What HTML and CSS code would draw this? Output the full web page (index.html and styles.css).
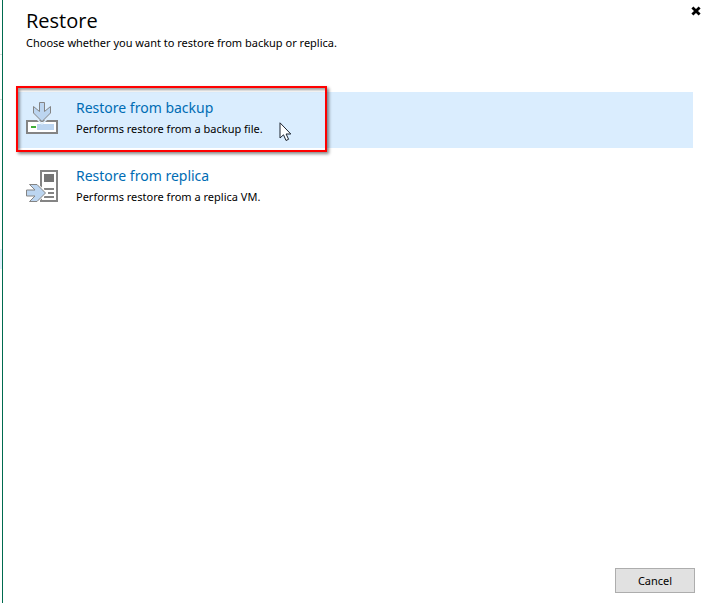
FILE: index.html
```html
<!DOCTYPE html>
<html lang="en">
<head>
<meta charset="utf-8">
<title>Restore</title>
<link rel="stylesheet" href="styles.css">
</head>
<body>
<div class="backdrop"></div>
<main class="dialog">
  <header class="header">
    <div>
      <h1 class="title">Restore</h1>
      <p class="subtitle">Choose whether you want to restore from backup or replica.</p>
    </div>
    <button class="close" type="button" aria-label="Close">
      <svg width="10" height="10" viewBox="0 0 10 10"><path d="M1.4 1.4 8.6 8.6M8.6 1.4 1.4 8.6" stroke="#000" stroke-width="2.8"/></svg>
    </button>
  </header>
  <nav class="options">
    <a class="option selected" href="#backup">
      <svg class="icon" width="32" height="34" viewBox="0 0 32 34">
        <rect x="1" y="21" width="30" height="12" fill="#fff" stroke="#848484" stroke-width="2"/>
        <rect x="4" y="24" width="24" height="6" fill="#bcd5f0"/>
        <rect x="4" y="24" width="7" height="6" fill="#fff"/>
        <rect x="5" y="26" width="5" height="2" fill="#3fae3a"/>
        <path d="M6 13 16 23 26 13V15L16 25 6 15Z" fill="#dcecfb"/>
        <path d="M13.500 2.500h5v9l6-5v6.500L16 21.500 7.500 13V6.500l6 5z" fill="#bcd5f0" stroke="#848484"/>
      </svg>
      <span class="text"><span class="name">Restore from backup</span><span class="detail">Performs restore from a backup file.</span></span>
      <span class="marker"></span>
      <svg class="pointer" width="13" height="20" viewBox="0 0 13 20"><path d="M1 .8V16l3.500-3.200 2.500 5.700 2.600-1.200-2.500-5.300h4.700z" fill="#fff" stroke="#1c2430"/></svg>
    </a>
    <a class="option" href="#replica">
      <svg class="icon" width="32" height="34" viewBox="0 0 32 34">
        <rect x="15" y="3" width="16" height="30" fill="#fff" stroke="#848484" stroke-width="2"/>
        <rect x="18" y="6" width="10" height="8" fill="#757575"/>
        <path d="M18 21h10M22 25h6M18 29h10" stroke="#848484" stroke-width="2"/>
        <path d="M2 15.500h9.500L22 25 12 34H2z" fill="#fff"/>
        <path d="M3.500 16.500h7.500L19.500 25l-8.500 8.500H3.500L9 28H.5v-6H9z" fill="#bcd5f0" stroke="#848484"/>
      </svg>
      <span class="text"><span class="name">Restore from replica</span><span class="detail">Performs restore from a replica VM.</span></span>
    </a>
  </nav>
  <footer class="footer"><button class="cancel" type="button">Cancel</button></footer>
</main>
</body>
</html>
```
FILE: styles.css
```css
* { box-sizing: border-box; }
body {
  display: flex;
  min-height: 100vh;
  margin: 0;
  background: #fff;
  color: #000;
  font: 11px/16px "Noto Sans", "Open Sans", sans-serif;
}
.backdrop {
  width: 2px;
  background: linear-gradient(#fff 54px, #ddd 54px 55px, #fff 55px 99px, #ddd 99px 100px, #fff 100px 249px, #e1f0fd 249px 269px, #fff 269px);
}
.dialog {
  display: flex;
  flex: 1;
  flex-direction: column;
  border-left: 1px solid #006b4f;
}
.header {
  display: flex;
  justify-content: space-between;
  padding: 6px 6px 0 23px;
}
.title { margin: 0; font: 400 20px/29px "Open Sans", "Noto Sans", sans-serif; }
.subtitle { margin: 0; }
.close {
  display: flex;
  align-self: flex-start;
  padding: 0;
  border: 0;
  background: none;
}
.options {
  display: flex;
  flex-direction: column;
  gap: 12px;
  margin: 41px 14px 0 15px;
}
.option {
  position: relative;
  display: flex;
  gap: 18px;
  height: 56px;
  padding: 8px;
  color: #000;
  text-decoration: none;
}
.selected { background: #daedfe; }
.icon { flex: none; }
.text { display: flex; flex-direction: column; }
.name { color: #006cb4; font-size: 14px; line-height: 16px; }
.detail { margin-top: 5px; line-height: 16px; }
.marker {
  position: absolute;
  top: -6px;
  left: -2px;
  width: 311px;
  height: 66px;
  border: 2px solid #f00;
  box-shadow: 2px 2px 3px #0007, inset 2px 2px 3px #0006;
}
.pointer { position: absolute; top: 30px; left: 261px; }
.footer {
  display: flex;
  justify-content: flex-end;
  margin-top: auto;
  padding: 0 12px 10px;
}
.cancel {
  width: 80px;
  height: 25px;
  padding: 0;
  border: 1px solid #adadad;
  background: #e1e1e1;
  color: #000;
  font: inherit;
}
```
